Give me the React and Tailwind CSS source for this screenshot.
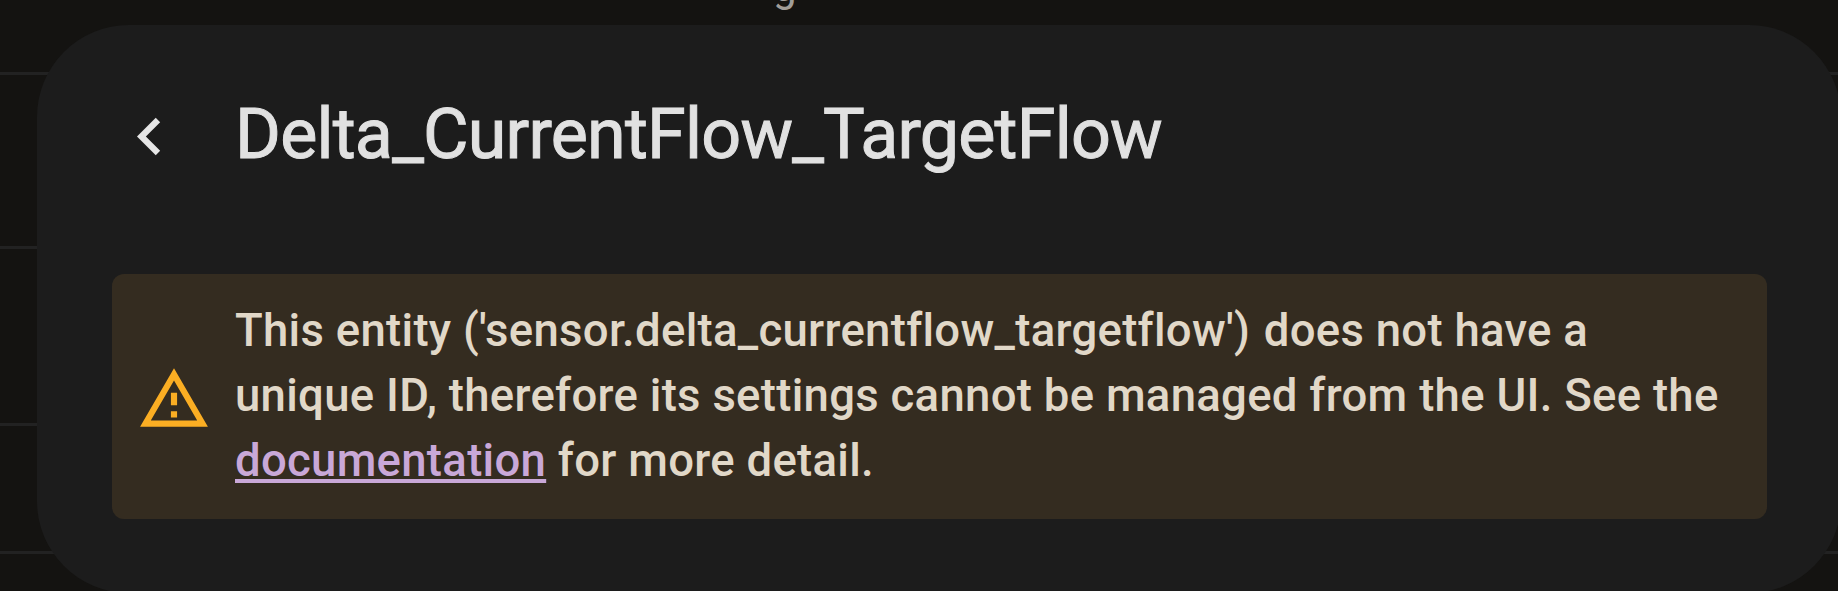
import React from 'react';

const rows = [
  { id: 1, height: 'h-[75px]' },
  { id: 2, height: 'h-[174px]' },
  { id: 3, height: 'h-[177px]' },
  { id: 4, height: 'h-[128px]' },
];

function BackIcon() {
  return (
    <svg viewBox="0 0 24 24" className="size-[75px] shrink-0 fill-[#e6e6e6]">
      <path d="M15.41,16.58L10.83,12L15.41,7.41L14,6L8,12L14,18L15.41,16.58Z" />
    </svg>
  );
}

function WarningIcon() {
  return (
    <svg viewBox="0 0 24 24" className="mt-[5px] size-[74px] shrink-0 fill-[#fbae23]">
      <path d="M12,2L1,21H23M12,6L19.53,19H4.47M11,10V14H13V10M11,16V18H13V16" />
    </svg>
  );
}

// Dimmed list that sits behind the dialog
function PageBehind() {
  return (
    <div className="h-full">
      {rows.map((row) => (
        <div key={row.id} className={`${row.height} flex border-b-[3px] border-[#222222]`}>
          {row.id === 1 && (
            <p className="-mt-[37px] pl-[773px] text-[42px] leading-[48px] text-[#a09d99]">g</p>
          )}
        </div>
      ))}
    </div>
  );
}

export default function App() {
  return (
    <div className="relative h-[591px] w-full overflow-hidden bg-[#141311] font-['Roboto',sans-serif]">
      <PageBehind />
      <div
        role="dialog"
        className="absolute top-[25px] left-[37px] h-[568px] w-[1804px] rounded-[92px] bg-[#1c1c1c] pr-[74px] pl-[75px]"
      >
        <header className="flex items-center gap-[48px] pt-[69px]">
          <button type="button" aria-label="Back" className="mt-[2px]">
            <BackIcon />
          </button>
          <h1 className="-mt-[2px] text-[70px] leading-[84px] tracking-[-0.78px] whitespace-nowrap text-[#e1e1e1] [-webkit-text-stroke:1px_#e1e1e1]">
            Delta_CurrentFlow_TargetFlow
          </h1>
        </header>
        <div className="mt-[98px] flex h-[245px] items-center rounded-[12px] bg-[#342c20] pl-[25px]">
          <WarningIcon />
          <p className="-mt-[2px] ml-[24px] text-[45.5px] leading-[65.3px] font-medium tracking-[0.29px] whitespace-nowrap text-[#e1d8c8]">
            This entity ('sensor.delta_currentflow_targetflow') <span className="ml-[2px]">does not have a</span>
            <br />
            unique ID, therefore its settings cannot be managed from the UI. See the
            <br />
            <a href="#documentation" className="text-[#c9a8d8] underline decoration-[4px] underline-offset-[3px]">
              documentation
            </a>{' '}
            for more detail.
          </p>
        </div>
      </div>
    </div>
  );
}
